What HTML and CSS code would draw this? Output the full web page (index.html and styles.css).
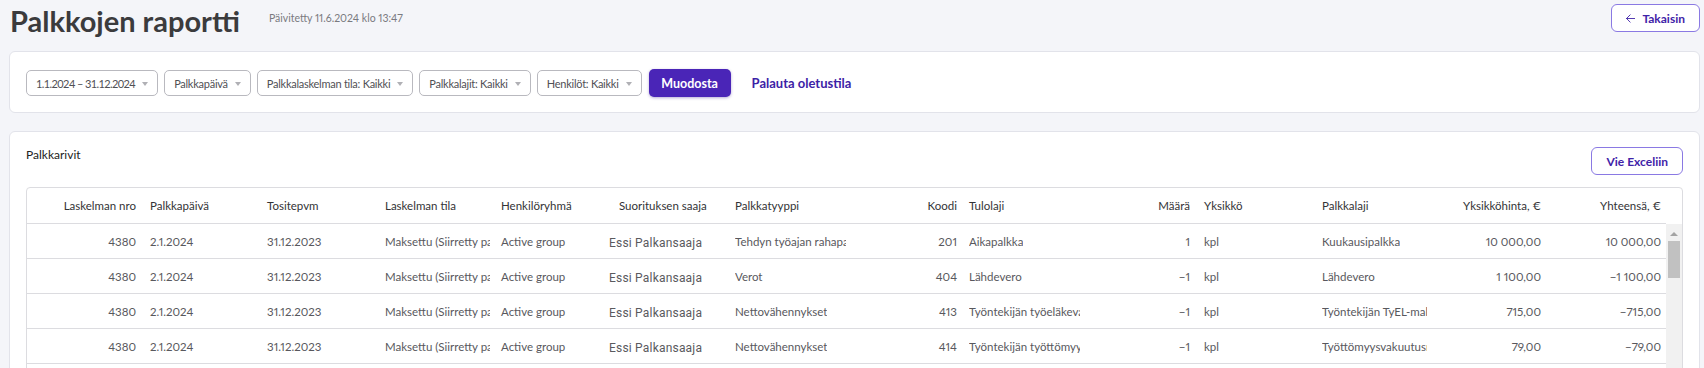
FILE: index.html
```html
<!DOCTYPE html>
<html lang="fi">
<head>
    <meta charset="UTF-8">
    <meta name="viewport" content="width=device-width, initial-scale=1.0">
    <title>Palkkojen raportti</title>
    <link rel="stylesheet" href="styles.css">
</head>
<body>
    <div class="page">
        <div class="top">
            <div class="title-group">
                <h1>Palkkojen raportti</h1>
                <span class="updated">Päivitetty 11.6.2024 klo 13:47</span>
            </div>
            <button class="outline-btn back-btn">
                <svg width="12" height="11" viewBox="3 4.5 18 15" fill="none" stroke="currentColor" stroke-width="1.7" stroke-linecap="round" stroke-linejoin="round">
                    <path d="M20 12H4"/>
                    <path d="M11 5l-7 7 7 7"/>
                </svg>
                Takaisin
            </button>
        </div>

        <div class="panel filters">
            <button class="select date">1.1.2024 – 31.12.2024 <span class="caret"></span></button>
            <button class="select">Palkkapäivä <span class="caret"></span></button>
            <button class="select">Palkkalaskelman tila: Kaikki <span class="caret"></span></button>
            <button class="select">Palkkalajit: Kaikki <span class="caret"></span></button>
            <button class="select">Henkilöt: Kaikki <span class="caret"></span></button>
            <button class="primary-btn">Muodosta</button>
            <a class="link-btn" href="#">Palauta oletustila</a>
        </div>

        <div class="panel rows-panel">
            <div class="rows-head">
                <h2>Palkkarivit</h2>
                <button class="outline-btn">Vie Exceliin</button>
            </div>

            <div class="grid">
                <div class="grid-row grid-header">
                    <div class="cell num">Laskelman nro</div>
                    <div class="cell">Palkkapäivä</div>
                    <div class="cell">Tositepvm</div>
                    <div class="cell state">Laskelman tila</div>
                    <div class="cell">Henkilöryhmä</div>
                    <div class="cell payee-head">Suorituksen saaja</div>
                    <div class="cell">Palkkatyyppi</div>
                    <div class="cell num">Koodi</div>
                    <div class="cell tight">Tulolaji</div>
                    <div class="cell num">Määrä</div>
                    <div class="cell">Yksikkö</div>
                    <div class="cell">Palkkalaji</div>
                    <div class="cell num">Yksikköhinta, €</div>
                    <div class="cell num last">Yhteensä, €</div>
                </div>

                <div class="grid-body">
                    <div class="grid-rows">
                        <div class="grid-row">
                            <div class="cell num">4380</div>
                            <div class="cell">2.1.2024</div>
                            <div class="cell">31.12.2023</div>
                            <div class="cell state"><span class="clip">Maksettu (Siirretty palkanmaksuun)</span></div>
                            <div class="cell">Active group</div>
                            <div class="cell payee">Essi Palkansaaja</div>
                            <div class="cell"><span class="clip">Tehdyn työajan rahapalkka</span></div>
                            <div class="cell num">201</div>
                            <div class="cell tight"><span class="clip">Aikapalkka</span></div>
                            <div class="cell num">1</div>
                            <div class="cell">kpl</div>
                            <div class="cell"><span class="clip">Kuukausipalkka</span></div>
                            <div class="cell num">10 000,00</div>
                            <div class="cell num last">10 000,00</div>
                        </div>
                        <div class="grid-row">
                            <div class="cell num">4380</div>
                            <div class="cell">2.1.2024</div>
                            <div class="cell">31.12.2023</div>
                            <div class="cell state"><span class="clip">Maksettu (Siirretty palkanmaksuun)</span></div>
                            <div class="cell">Active group</div>
                            <div class="cell payee">Essi Palkansaaja</div>
                            <div class="cell"><span class="clip">Verot</span></div>
                            <div class="cell num">404</div>
                            <div class="cell tight"><span class="clip">Lähdevero</span></div>
                            <div class="cell num">−1</div>
                            <div class="cell">kpl</div>
                            <div class="cell"><span class="clip">Lähdevero</span></div>
                            <div class="cell num">1 100,00</div>
                            <div class="cell num last">−1 100,00</div>
                        </div>
                        <div class="grid-row">
                            <div class="cell num">4380</div>
                            <div class="cell">2.1.2024</div>
                            <div class="cell">31.12.2023</div>
                            <div class="cell state"><span class="clip">Maksettu (Siirretty palkanmaksuun)</span></div>
                            <div class="cell">Active group</div>
                            <div class="cell payee">Essi Palkansaaja</div>
                            <div class="cell"><span class="clip">Nettovähennykset</span></div>
                            <div class="cell num">413</div>
                            <div class="cell tight"><span class="clip">Työntekijän työeläkevakuutusmaksu</span></div>
                            <div class="cell num">−1</div>
                            <div class="cell">kpl</div>
                            <div class="cell"><span class="clip">Työntekijän TyEL-maksu</span></div>
                            <div class="cell num">715,00</div>
                            <div class="cell num last">−715,00</div>
                        </div>
                        <div class="grid-row">
                            <div class="cell num">4380</div>
                            <div class="cell">2.1.2024</div>
                            <div class="cell">31.12.2023</div>
                            <div class="cell state"><span class="clip">Maksettu (Siirretty palkanmaksuun)</span></div>
                            <div class="cell">Active group</div>
                            <div class="cell payee">Essi Palkansaaja</div>
                            <div class="cell"><span class="clip">Nettovähennykset</span></div>
                            <div class="cell num">414</div>
                            <div class="cell tight"><span class="clip">Työntekijän työttömyysvakuutusmaksu</span></div>
                            <div class="cell num">−1</div>
                            <div class="cell">kpl</div>
                            <div class="cell"><span class="clip">Työttömyysvakuutusmaksu</span></div>
                            <div class="cell num">79,00</div>
                            <div class="cell num last">−79,00</div>
                        </div>
                        <div class="grid-row">
                            <div class="cell num">4380</div>
                            <div class="cell">2.1.2024</div>
                            <div class="cell">31.12.2023</div>
                            <div class="cell state"><span class="clip">Maksettu (Siirretty palkanmaksuun)</span></div>
                            <div class="cell">Active group</div>
                            <div class="cell payee">Essi Palkansaaja</div>
                            <div class="cell"><span class="clip">Nettovähennykset</span></div>
                            <div class="cell num">415</div>
                            <div class="cell tight"><span class="clip">Sairausvakuutusmaksu</span></div>
                            <div class="cell num">−1</div>
                            <div class="cell">kpl</div>
                            <div class="cell"><span class="clip">Sairausvakuutusmaksu</span></div>
                            <div class="cell num">0,00</div>
                            <div class="cell num last">0,00</div>
                        </div>
                    </div>
                    <div class="scrollbar">
                        <span class="scroll-arrow"></span>
                        <span class="scroll-thumb"></span>
                    </div>
                </div>
            </div>
        </div>
    </div>
</body>
</html>
```

FILE: styles.css
```css
* {
    margin: 0;
    padding: 0;
    box-sizing: border-box;
}

body {
    font-family: 'Lato', 'Liberation Sans', sans-serif;
    font-feature-settings: "pnum";
    background: #f4f5f9;
    color: #444;
}

.page {
    padding: 0 4px 20px 9px;
}

/* Header */
.top {
    display: flex;
    justify-content: space-between;
    align-items: flex-start;
    height: 51px;
    padding-top: 4px;
}

.title-group {
    display: flex;
    align-items: center;
    gap: 29px;
    margin-top: -3px;
    padding-left: 1px;
}

.title-group h1 {
    font-size: 29px;
    font-weight: 700;
    color: #3b3b3d;
    line-height: 40px;
}

.updated {
    font-size: 10.5px;
    color: #7a7a80;
    margin-top: -6px;
}

.outline-btn {
    display: inline-flex;
    align-items: center;
    gap: 7px;
    height: 28px;
    padding: 0 14px;
    background: white;
    border: 1px solid #8a79e3;
    border-radius: 6px;
    color: #3f23a8;
    font-family: inherit;
    font-size: 12px;
    font-weight: 700;
    cursor: pointer;
}

.back-btn {
    width: 89px;
    justify-content: center;
}

/* Panels */
.panel {
    background: white;
    border: 1px solid #e2e3ea;
    border-radius: 6px;
}

.filters {
    display: flex;
    align-items: center;
    gap: 6px;
    padding: 17px 16px 15px;
    margin-bottom: 18px;
}

.select {
    display: inline-flex;
    align-items: center;
    gap: 7px;
    height: 26px;
    padding: 0 9px;
    background: white;
    border: 1px solid #b9b9bf;
    border-radius: 5px;
    color: #505055;
    font-family: inherit;
    font-size: 11px;
    letter-spacing: -0.25px;
    cursor: pointer;
}

.select.date {
    letter-spacing: -0.6px;
}

.caret {
    width: 0;
    height: 0;
    border-left: 3.5px solid transparent;
    border-right: 3.5px solid transparent;
    border-top: 4px solid #b0b0b5;
    margin-top: 1px;
}

.primary-btn {
    height: 28px;
    width: 82px;
    margin-left: 1px;
    background: #4a25b7;
    border: none;
    border-radius: 5px;
    color: white;
    font-family: inherit;
    font-size: 12.5px;
    font-weight: 700;
    box-shadow: 0 1px 3px rgba(50, 20, 140, 0.35);
    cursor: pointer;
}

.link-btn {
    margin-left: 15px;
    color: #3c22a6;
    font-size: 13px;
    font-weight: 700;
    text-decoration: none;
}

/* Rows panel */
.rows-panel {
    padding: 15px 16px 16px;
}

.rows-head {
    display: flex;
    justify-content: space-between;
    align-items: flex-start;
    margin-bottom: 12px;
}

.rows-head h2 {
    font-size: 12px;
    font-weight: 400;
    color: #222;
    line-height: 16px;
}

.grid {
    border: 1px solid #dcdce0;
    border-radius: 4px;
    overflow: hidden;
}

.grid-row {
    display: grid;
    grid-template-columns: 116px 117px 108px 126px 108px 126px 125px 111px 123px 110px 118px 119px 114px 118px;
    height: 35px;
    border-bottom: 1px solid #dcdce0;
    font-size: 11.5px;
    color: #58585d;
}

.grid-header {
    color: #333336;
    margin-right: 16px;
    height: 36px;
}

.cell {
    display: flex;
    align-items: center;
    padding: 0 7px;
    white-space: nowrap;
    overflow: hidden;
}

.clip {
    min-width: 0;
    overflow: hidden;
}

.cell.num {
    justify-content: flex-end;
}

.cell.tight {
    padding-left: 5px;
}

.cell.last {
    padding-right: 5px;
}

.cell.state {
    padding: 0 4px 0 17px;
}

.payee-head {
    padding-left: 17px;
}

.cell.payee {
    font-family: 'Roboto', 'Liberation Sans', sans-serif;
    font-size: 12px;
    color: #5a5a5e;
    letter-spacing: 0.2px;
    padding-top: 3px;
}

.grid-body {
    display: flex;
    height: 400px;
}

.grid-rows {
    flex: 1;
}

.scrollbar {
    width: 16px;
    background: #f1f1f1;
    display: flex;
    flex-direction: column;
    align-items: center;
}

.scroll-arrow {
    margin-top: 8px;
    width: 0;
    height: 0;
    border-left: 4px solid transparent;
    border-right: 4px solid transparent;
    border-bottom: 4px solid #a3a3a3;
}

.scroll-thumb {
    margin-top: 5px;
    width: 12px;
    height: 37px;
    background: #c1c1c1;
}
```
